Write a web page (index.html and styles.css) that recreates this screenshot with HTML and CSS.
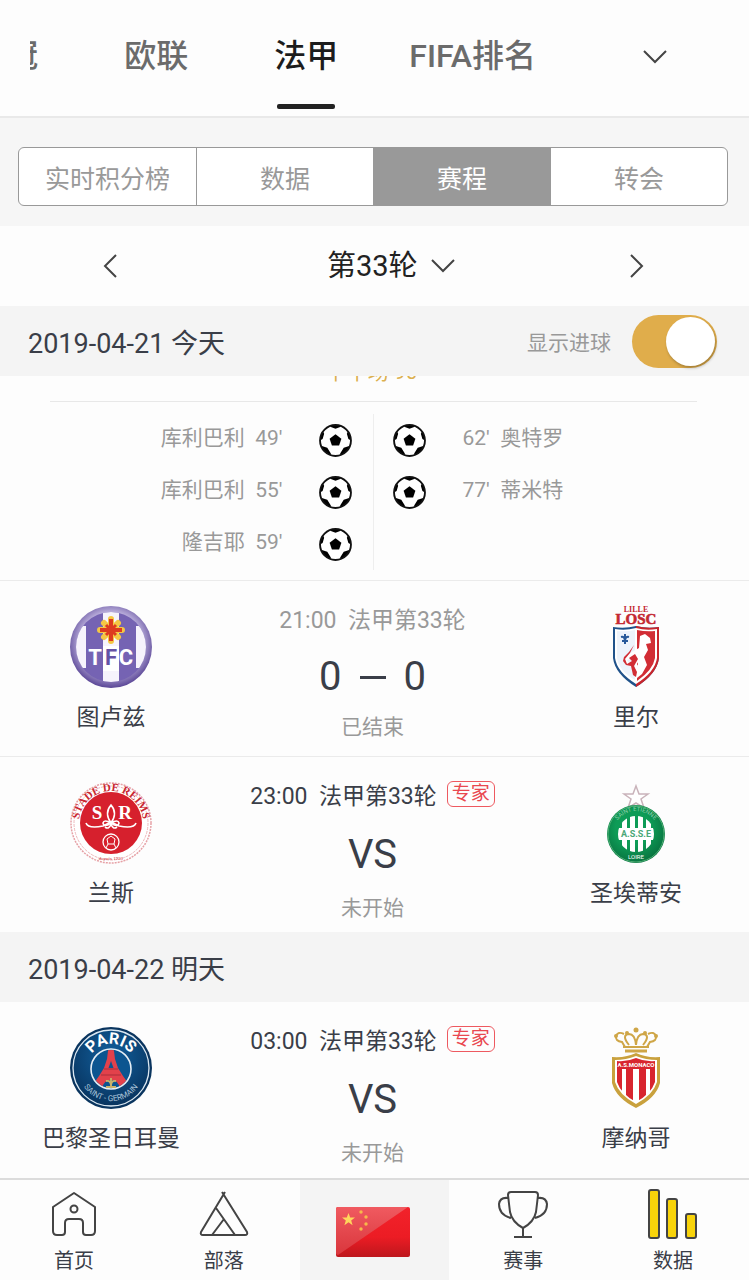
FILE: index.html
```html
<!DOCTYPE html>
<html lang="zh-CN">
<head>
<meta charset="utf-8">
<meta name="viewport" content="width=device-width, initial-scale=1">
<title>法甲赛程</title>
<link rel="stylesheet" href="styles.css">
</head>
<body>
<svg class="defs" aria-hidden="true">
  <defs>
    <symbol id="ball" viewBox="0 0 32 32">
      <clipPath id="ball-clip"><circle cx="16" cy="16" r="15"/></clipPath>
      <circle cx="16" cy="16" r="15" fill="#fff"/>
      <g clip-path="url(#ball-clip)" fill="#000">
        <path d="M16 10l5.700 4.200-2.200 6.600h-7l-2.200-6.600z"/>
        <path d="M10 0h12l-1.500 3L16 4.500 11.500 3z"/>
        <path d="M0 9l3.500-2.500 1.500 3-1.500 5L0 16.500zM32 9l-3.500-2.500-1.500 3 1.500 5 3.500 2z"/>
        <path d="M2 21l6 2 3.500 5.500L11 32 4 29zM30 21l-6 2-3.500 5.500L21 32l7-3z"/>
      </g>
      <circle cx="16" cy="16" r="15" fill="none" stroke="#111" stroke-width="1.800"/>
    </symbol>
  </defs>
</svg>

<header class="tabs">
  <nav class="tab-list" aria-label="赛事">
    <button class="tab">欧冠</button>
    <button class="tab">欧联</button>
    <button class="tab tab-active" aria-current="page">法甲</button>
    <button class="tab">FIFA排名</button>
  </nav>
  <button class="tab-more" aria-label="更多赛事">
    <svg width="26" height="16" viewBox="0 0 26 16"><path d="M2 2l11 11L24 2" class="stroke"/></svg>
  </button>
</header>

<main>
  <div class="segments-wrap">
    <div class="segments">
      <button class="segment">实时积分榜</button>
      <button class="segment">数据</button>
      <button class="segment segment-active" aria-pressed="true">赛程</button>
      <button class="segment">转会</button>
    </div>
  </div>

  <div class="round">
    <button class="round-step" aria-label="上一轮">
      <svg width="16" height="26" viewBox="0 0 16 26"><path d="M14 2L3 13l11 11" class="stroke"/></svg>
    </button>
    <label class="round-pick">
      <select class="round-select" aria-label="轮次"><option>第33轮</option></select>
      <svg width="26" height="16" viewBox="0 0 26 16"><path d="M2 2l11 11L24 2" class="stroke"/></svg>
    </label>
    <button class="round-step" aria-label="下一轮">
      <svg width="16" height="26" viewBox="0 0 16 26"><path d="M2 2l11 11L2 24" class="stroke"/></svg>
    </button>
  </div>

  <div class="date-bar">
    <h2 class="date">2019-04-21 今天</h2>
    <label class="switch-label" for="goals-switch">显示进球</label>
    <input class="switch" type="checkbox" id="goals-switch" checked>
  </div>

  <section class="goals">
    <div class="half"><span class="half-text">下半场 90'</span></div>
    <div class="goal-columns">
      <ul class="goal-list goal-home">
        <li><span>库利巴利&nbsp; 49'</span><svg class="ball"><use href="#ball"/></svg></li>
        <li><span>库利巴利&nbsp; 55'</span><svg class="ball"><use href="#ball"/></svg></li>
        <li><span>隆吉耶&nbsp; 59'</span><svg class="ball"><use href="#ball"/></svg></li>
      </ul>
      <ul class="goal-list goal-away">
        <li><svg class="ball"><use href="#ball"/></svg><span>62'&nbsp; 奥特罗</span></li>
        <li><svg class="ball"><use href="#ball"/></svg><span>77'&nbsp; 蒂米特</span></li>
      </ul>
    </div>
  </section>

  <article class="match finished">
    <div class="team">
      <svg class="crest" viewBox="0 0 82 82" role="img" aria-label="TFC">
        <defs>
          <radialGradient id="tfc-rim" cx=".5" cy=".45" r=".55"><stop offset=".7" stop-color="#b5a9d8"/><stop offset="1" stop-color="#5a4696"/></radialGradient>
          <clipPath id="tfc-clip"><circle cx="41" cy="41" r="35"/></clipPath>
        </defs>
        <circle cx="41" cy="41" r="41" fill="url(#tfc-rim)"/>
        <g clip-path="url(#tfc-clip)">
          <path fill="#7563b3" d="M0 0h82v82H0z"/>
          <path fill="#f6f3fc" d="M6 20h10v42H6zM33 6h16v71H33zM66 20h10v42H66z"/>
          <path fill="#7563b3" d="M17 40h48v24H17z"/>
          <path fill="#fff" d="M33 40h16v25H33z"/>
        </g>
        <g font-family="Roboto, sans-serif" font-size="22" font-weight="700" text-anchor="middle">
          <text x="25" y="59" fill="#fff">T</text><text x="41" y="59" fill="#6552a5">F</text><text x="56" y="59" fill="#fff">C</text>
        </g>
        <g stroke="#f4c744" stroke-width="6" stroke-linecap="round"><path d="M41 13v22M30 24h22M34 17l14 14M48 17L34 31"/></g>
        <g stroke="#dd3b20" stroke-width="3"><path d="M41 13v22M30 24h22" stroke-width="4"/><path d="M36 19l10 10M46 19L36 29"/></g>
      </svg>
      <span class="team-name">图卢兹</span>
    </div>
    <div class="info">
      <div class="time">21:00&nbsp; 法甲第33轮</div>
      <div class="score"><span>0</span><i class="dash"></i><span>0</span></div>
      <div class="status">已结束</div>
    </div>
    <div class="team">
      <svg class="crest" viewBox="0 0 82 82" role="img" aria-label="LOSC">
        <g font-family="Liberation Serif, serif" font-weight="700" text-anchor="middle" fill="#c42832">
          <text x="41" y="6" font-size="8">LILLE</text><text x="41" y="18" font-size="15" stroke="#c42832" stroke-width=".6">LOSC</text>
        </g>
        <path d="M18 21q12 2 23-1 11 3 23 1v31q-2 16-23 29Q20 68 18 52z" fill="#20528a"/>
        <path d="M41 20q11 3 23 1v31q-2 16-23 29z" fill="#c9252c"/>
        <path d="M20 23q10 2 21-1 10 3 21 1v29q-2 14-21 26Q22 66 20 52z" fill="#fff"/>
        <path d="M42 24q9 2 18 1v27q-2 12-18 23z" fill="#d22d35"/>
        <path d="M22 25q9 1 18-1v50Q24 65 22 52z" fill="#edf3fb"/>
        <path d="M45 30l5-2 5 4 1 5-5 1 2 6-4 7 3 8-5 9-5 4-3-7 4-7-4-7-7 3 3 5-4-2-1-6 7-5 7-4z" fill="#fff"/>
        <path d="M39 39l-4 8-5 6 2 5 5-3-3-3 6-4 3 5-4 7 3 6-1 5-3-2-2-9-5-1-3-4 1-4 5-5z" fill="#d22d35"/>
        <path d="M30 28v10M26 31q4-1 4 5 0-6 4-5M27 35h6" fill="none" stroke="#28599a" stroke-width="2"/>
      </svg>
      <span class="team-name">里尔</span>
    </div>
  </article>

  <article class="match upcoming">
    <div class="team">
      <svg class="crest" viewBox="0 0 82 82" role="img" aria-label="Stade de Reims">
        <defs><path id="reims-arc" d="M9 41a32 32 0 0 1 64 0"/></defs>
        <circle cx="41" cy="41" r="40" fill="#fff" stroke="#e6a1a6" stroke-width="1.500" stroke-dasharray="2 1"/>
        <circle cx="41" cy="41" r="37" fill="none" stroke="#edb8bb" stroke-width="1" stroke-dasharray="3 1"/>
        <circle cx="41" cy="41" r="31" fill="#d6202d"/>
        <text font-family="Liberation Serif, serif" font-size="11" font-weight="700" fill="#c92832" text-anchor="middle"><textPath href="#reims-arc" startOffset="50%">STADE DE REIMS</textPath></text>
        <text x="41" y="78" font-family="Liberation Serif, serif" font-size="5" fill="#c92832" text-anchor="middle">depuis 1931</text>
        <g font-family="Liberation Serif, serif" font-size="19" font-weight="700" fill="#fff" text-anchor="middle"><text x="27" y="37">S</text><text x="55" y="37">R</text></g>
        <g fill="none" stroke="#fff" stroke-width="1.600">
          <path d="M41 23q-7 8 0 18 7-10 0-18zM41 41q-7-4-8 0 1 5 8 0 7 5 8 0-1-4-8 0"/>
          <path d="M16 41q2 6 17 3l8-4 8 4q15 3 17-3M35 45q4 3 6-3 2 6 6 3"/>
          <circle cx="41" cy="60" r="8" stroke-width="1.300"/><path d="M37 57l4-3 4 3-1 5h-6zM38 62l-2 4M44 62l2 4" stroke-width="1"/>
        </g>
      </svg>
      <span class="team-name">兰斯</span>
    </div>
    <div class="info">
      <div class="time">23:00&nbsp; 法甲第33轮<span class="badge">专家</span></div>
      <div class="score">VS</div>
      <div class="status">未开始</div>
    </div>
    <div class="team">
      <svg class="crest" viewBox="0 0 82 82" role="img" aria-label="ASSE">
        <defs>
          <radialGradient id="asse" cx=".45" cy=".4" r=".6"><stop offset=".5" stop-color="#0e9c57"/><stop offset="1" stop-color="#087440"/></radialGradient>
          <clipPath id="asse-clip"><circle cx="41" cy="52" r="18"/></clipPath>
          <path id="asse-arc" d="M18 52a23 23 0 0 1 46 0"/>
        </defs>
        <path d="M41 4l3 8h9l-7 5 3 9-8-5-8 5 3-9-7-5h9z" fill="#fff" stroke="#c9b3ba" stroke-width="1.500"/>
        <circle cx="41" cy="52" r="29" fill="url(#asse)"/>
        <circle cx="41" cy="52" r="28" fill="none" stroke="#4fae74" stroke-width="1"/>
        <text font-family="Roboto, sans-serif" font-size="6" fill="#8fd0aa" text-anchor="middle"><textPath href="#asse-arc" startOffset="50%">SAINT ETIENNE</textPath></text>
        <g clip-path="url(#asse-clip)" fill="#fff"><path d="M22 46h38v12H22zM27 32h5v40h-5zM35 32h5v40h-5zM43 32h5v40h-5zM51 32h5v40h-5z"/></g>
        <text x="41" y="55" font-family="Roboto, sans-serif" font-size="9" font-weight="700" fill="#4aa877" text-anchor="middle">A.S.S.E</text>
        <text x="41" y="77" font-family="Roboto, sans-serif" font-size="6" fill="#fff" text-anchor="middle">LOIRE</text>
      </svg>
      <span class="team-name">圣埃蒂安</span>
    </div>
  </article>

  <div class="date-bar">
    <h2 class="date">2019-04-22 明天</h2>
  </div>

  <article class="match upcoming">
    <div class="team">
      <svg class="crest" viewBox="0 0 82 82" role="img" aria-label="Paris Saint-Germain">
        <defs>
          <radialGradient id="psg" cx=".5" cy=".35" r=".65"><stop offset="0" stop-color="#12609e"/><stop offset="1" stop-color="#08345f"/></radialGradient>
          <path id="psg-top" d="M17 41a24 24 0 0 1 48 0"/><path id="psg-bottom" d="M8 41a33 33 0 0 0 66 0"/>
          <clipPath id="psg-clip"><circle cx="41" cy="42" r="19"/></clipPath>
        </defs>
        <circle cx="41" cy="41" r="41" fill="#0a355f"/>
        <circle cx="41" cy="41" r="38" fill="url(#psg)" stroke="#dbe8f2" stroke-width="1.300"/>
        <circle cx="41" cy="42" r="20" fill="#0c5590" stroke="#e5eef5" stroke-width="1.600"/>
        <g clip-path="url(#psg-clip)">
          <path d="M38.500 20h5l1.500 12 3 9 5 8 10 14H50q-1-10-9-10t-9 10H19l10-14 5-8 3-9z" fill="#e2414b"/>
          <path d="M34 42h14M31 48h20" stroke="#bd3440" stroke-width="1.500"/><path d="M38.500 41l2.500-7 2.500 7z" fill="#0c5590"/>
        </g>
        <path d="M41 51v8M36 54q5-1 5 5 0-6 5-5M36 60h10" fill="none" stroke="#c9b36c" stroke-width="1.800"/>
        <text font-family="Roboto, sans-serif" font-size="16" font-weight="700" fill="#fff" text-anchor="middle"><textPath href="#psg-top" startOffset="50%">PARIS</textPath></text>
        <text font-family="Roboto, sans-serif" font-size="8" fill="#a9c3d9" text-anchor="middle"><textPath href="#psg-bottom" startOffset="50%">SAINT - GERMAIN</textPath></text>
      </svg>
      <span class="team-name">巴黎圣日耳曼</span>
    </div>
    <div class="info">
      <div class="time">03:00&nbsp; 法甲第33轮<span class="badge">专家</span></div>
      <div class="score">VS</div>
      <div class="status">未开始</div>
    </div>
    <div class="team">
      <svg class="crest" viewBox="0 0 82 82" role="img" aria-label="AS Monaco">
        <g fill="none" stroke="#cfa647" stroke-width="2">
          <path d="M30 20l-3-5q-7-1-6-6 2-5 8-2M52 20l3-5q7-1 6-6-2-5-8-2M34 18q-8-10 0-11 6 0 7 11 1-11 7-11 8 1 0 11M28 20h26"/>
          <path d="M30 24h22" stroke-width="3"/>
        </g>
        <g fill="#cfa647"><circle cx="41" cy="3" r="2.500"/><circle cx="21" cy="9" r="2"/><circle cx="61" cy="9" r="2"/><circle cx="32" cy="6" r="2"/><circle cx="50" cy="6" r="2"/></g>
        <path d="M41 26q10 5 24 4v26q-4 15-24 25Q21 71 17 56V30q14 1 24-4z" fill="#c9a13d"/>
        <path d="M41 29q10 4 21 4v22q-4 13-21 22-17-9-21-22V33q11 0 21-4z" fill="#fff"/>
        <clipPath id="asm-clip"><path d="M41 31q9 4 19 3v21q-4 12-19 20-15-8-19-20V34q10 1 19-3z"/></clipPath>
        <g clip-path="url(#asm-clip)" fill="#d8252f"><path d="M20 30h42v12H20zM22 42h5v40h-5zM31 42h7v40h-7zM44 42h7v40h-7zM55 42h5v40h-5z"/></g>
        <text x="41" y="40" font-family="Roboto, sans-serif" font-size="6" font-weight="700" fill="#fff" text-anchor="middle">A.S.MONACO</text>
      </svg>
      <span class="team-name">摩纳哥</span>
    </div>
  </article>
</main>

<nav class="bottom-nav" aria-label="主导航">
  <a class="nav-item" href="#home">
    <svg class="nav-icon" viewBox="0 0 50 50"><path d="M25 4L4 18v24q0 4 4 4h5q3 0 3-3V34q0-4 4-4h10q4 0 4 4v9q0 3 3 3h5q4 0 4-4V18z"/><circle cx="25" cy="20" r="3.500"/></svg>
    <span>首页</span>
  </a>
  <a class="nav-item" href="#tribe">
    <svg class="nav-icon" viewBox="0 0 50 50"><path d="M26 3L2 43q-1 3 2 3h42q3 0 2-3L23 3M17 19l19 27M25 30L13 46"/></svg>
    <span>部落</span>
  </a>
  <a class="nav-item nav-flag" href="#china" aria-label="中国">
    <svg class="flag" viewBox="0 0 74 50">
      <defs>
        <linearGradient id="flag-base" x1="0" y1="0" x2="0" y2="1"><stop offset="0" stop-color="#f2222b"/><stop offset=".6" stop-color="#ec1c24"/><stop offset="1" stop-color="#bd171d"/></linearGradient>
        <linearGradient id="flag-gloss" x1="0" y1="0" x2="0" y2="1"><stop offset="0" stop-color="#f05a60"/><stop offset="1" stop-color="#d9363c"/></linearGradient>
      </defs>
      <rect width="74" height="50" rx="2" fill="url(#flag-base)"/>
      <path d="M2 0h70L2 48q-2 0-2-2V2q0-2 2-2z" fill="url(#flag-gloss)"/>
      <path d="M12.500 6l1.700 4.500h4.800L15.200 13.500l1.400 4.700-4.100-2.900-4.100 2.900 1.400-4.700L6 10.500h4.800z" fill="#ffd65c"/>
      <g fill="#f7b94a"><circle cx="25" cy="5" r="1.700"/><circle cx="30" cy="10" r="1.700"/><circle cx="30" cy="17" r="1.700"/><circle cx="25" cy="22" r="1.700"/></g>
    </svg>
  </a>
  <a class="nav-item" href="#events">
    <svg class="nav-icon" viewBox="0 0 50 50"><path d="M13 3h24q3 0 3 3-1 9-2 17-2 10-13 16-11-6-13-16-1-8-2-17 0-3 3-3zM10 9q-8-1-9 6 0 11 12 14M40 9q8-1 9 6 0 11-12 14M25 39v9M16 48h18"/></svg>
    <span>赛事</span>
  </a>
  <a class="nav-item" href="#data" aria-current="page">
    <svg class="nav-icon nav-bars" viewBox="0 0 50 50"><rect x="1" y="1" width="10" height="48" rx="2"/><rect x="19" y="10" width="10" height="39" rx="2"/><rect x="38" y="25" width="10" height="24" rx="2"/></svg>
    <span>数据</span>
  </a>
</nav>
</body>
</html>
```

FILE: styles.css
```css
* { box-sizing: border-box; }

body {
  margin: 0;
  min-height: 100vh;
  display: flex;
  flex-direction: column;
  background: #fdfdfd;
  color: #3a3e48;
  font-family: Roboto, "Noto Sans CJK SC", sans-serif;
}

main { flex: 1; }

button, select {
  margin: 0;
  padding: 0;
  border: 0;
  background: none;
  color: inherit;
  font: inherit;
}

svg { display: block; }

.defs { position: absolute; width: 0; height: 0; }

.stroke { fill: none; stroke: #444; stroke-width: 2; }

/* Competition tabs */
.tabs {
  display: flex;
  height: 118px;
  padding-left: 30px;
  border-bottom: 2px solid #e9e9e9;
}

.tab-list {
  flex: 1;
  display: flex;
  justify-content: flex-end;
  overflow: hidden;
}

.tab {
  flex: none;
  display: flex;
  flex-direction: column;
  align-items: center;
  min-width: 150px;
  padding: 32px 28px 0;
  color: #6b6b6b;
  font-size: 32px;
  font-weight: 500;
  line-height: 48px;
  white-space: nowrap;
}

.tab-active { color: #1c1c1c; }

.tab-active::after {
  content: "";
  width: 58px;
  height: 5px;
  margin-top: 24px;
  border-radius: 2px;
  background: #222;
}

.tab-more {
  display: flex;
  justify-content: center;
  width: 185px;
  padding: 49px 4px 0 0;
}

/* Section switch */
.segments-wrap {
  padding: 29px 21px 20px 18px;
  background: #f6f6f6;
}

.segments {
  display: grid;
  grid-template-columns: repeat(4, 1fr);
  height: 59px;
  overflow: hidden;
  border: 1px solid #999;
  border-radius: 6px;
  background: #fff;
}

.segment { color: #999; font-size: 25px; }
.segment + .segment { border-left: 1px solid #999; }
.segment-active { background: #999; color: #fff; }

/* Round picker */
.round {
  display: flex;
  align-items: center;
  justify-content: space-between;
  height: 80px;
  padding: 0 104px 0 102px;
}

.round-pick {
  display: flex;
  align-items: center;
  gap: 12px;
  padding-left: 36px;
}

.round-select {
  appearance: none;
  color: #222;
  font-size: 29px;
  line-height: 44px;
}

/* Date bars */
.date-bar {
  display: flex;
  align-items: center;
  height: 70px;
  padding: 0 32px 0 28px;
  background: #f4f4f4;
}

.date {
  flex: 1;
  margin: 0;
  font-size: 27px;
  font-weight: 400;
}

.switch-label { margin-right: 21px; color: #999; font-size: 21px; }

.switch {
  appearance: none;
  display: flex;
  justify-content: flex-end;
  width: 85px;
  height: 53px;
  margin: 0;
  padding: 2px;
  border-radius: 27px;
  background: #e0ad4b;
}

.switch::before {
  content: "";
  width: 49px;
  height: 49px;
  border-radius: 50%;
  background: #fff;
  box-shadow: 1px 2px 3px #0004;
}

.switch:not(:checked) { justify-content: flex-start; background: #ccc; }

/* Goal timeline */
.goals {
  padding: 0 52px 10px 50px;
  color: #999;
  font-size: 21px;
}

.half {
  display: flex;
  align-items: flex-start;
  justify-content: center;
  height: 26px;
  overflow: hidden;
  border-bottom: 1px solid #e8e8e8;
}

.half-text {
  margin-top: -20px;
  color: #dcb04e;
  line-height: 32px;
}

.goal-columns {
  display: grid;
  grid-template-columns: 1fr 1fr;
  padding-top: 12px;
}

.goal-list {
  margin: 0;
  padding: 0;
  list-style: none;
}

.goal-list li {
  display: flex;
  align-items: center;
  height: 52px;
}

.goal-list span { line-height: 24px; padding-bottom: 4px; }

.goal-home { border-right: 1px solid #eee; }
.goal-home li { justify-content: flex-end; gap: 36px; padding-right: 21px; }
.goal-away li { gap: 37px; padding-left: 19px; }

.ball { width: 33px; height: 33px; }

/* Matches */
.match {
  display: grid;
  grid-template-columns: 222px 1fr 226px;
  min-height: 176px;
  padding-top: 25px;
  border-top: 1px solid #ebebeb;
}

.date-bar + .match { border-top: 0; }

.team {
  display: flex;
  flex-direction: column;
  align-items: center;
  gap: 13px;
}

.crest { width: 82px; height: 82px; overflow: visible; }

.team-name { font-size: 23px; line-height: 34px; }

.info {
  display: flex;
  flex-direction: column;
  align-items: center;
  white-space: nowrap;
}

.time {
  display: flex;
  align-items: center;
  gap: 10px;
  height: 24px;
  font-size: 23px;
}

.finished .time { color: #999; }

.badge {
  padding: 0 4px;
  border: 1px solid #ee5960;
  border-radius: 6px;
  color: #e94850;
  font-size: 19px;
  line-height: 24px;
}

.score {
  display: flex;
  align-items: center;
  gap: 18px;
  margin: 25px 0 15px;
  font-size: 40px;
  line-height: 48px;
}

.finished .score { margin: 23px 0 12px; }

.dash { width: 26px; height: 3px; background: #3a3e48; }

.status { color: #999; font-size: 21px; line-height: 28px; }

/* Bottom navigation */
.bottom-nav {
  display: grid;
  grid-template-columns: repeat(5, 1fr);
  height: 102px;
  border-top: 2px solid #dcdcdc;
}

.nav-item {
  display: flex;
  flex-direction: column;
  align-items: center;
  gap: 7px;
  padding-top: 9px;
  padding-right: 2px;
  color: #3a3e48;
  font-size: 20px;
  line-height: 30px;
  text-decoration: none;
}

.nav-icon {
  width: 50px;
  height: 50px;
  fill: none;
  stroke: #444;
  stroke-width: 2;
  stroke-linejoin: round;
}

.nav-bars { fill: #f8d30a; }

.nav-flag { justify-content: center; padding: 4px 2px 0 0; background: #f4f4f4; }

.flag { width: 74px; height: 50px; }
```
